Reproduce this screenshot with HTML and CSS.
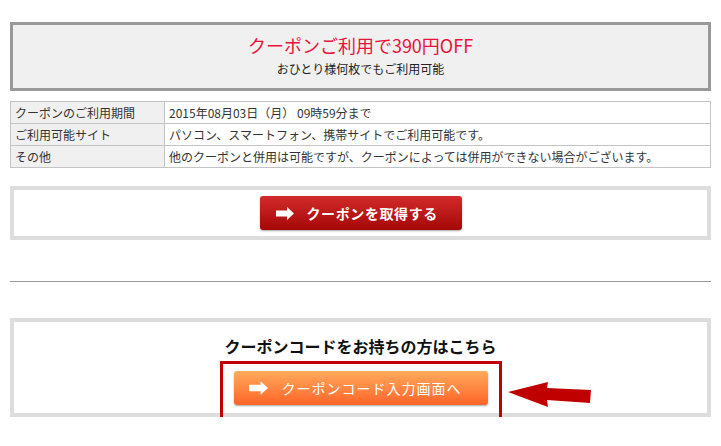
FILE: index.html
```html
<!DOCTYPE html>
<html lang="ja">
<head>
    <meta charset="UTF-8">
    <meta name="viewport" content="width=device-width, initial-scale=1.0">
    <title>クーポン</title>
    <link rel="stylesheet" href="styles.css">
</head>
<body>

    <div class="coupon-head">
        <p class="coupon-title">クーポンご利用で390円OFF</p>
        <p class="coupon-note">おひとり様何枚でもご利用可能</p>
    </div>

    <table class="coupon-info">
        <tr>
            <th>クーポンのご利用期間</th>
            <td>2015年08月03日（月） 09時59分まで</td>
        </tr>
        <tr>
            <th>ご利用可能サイト</th>
            <td>パソコン、スマートフォン、携帯サイトでご利用可能です。</td>
        </tr>
        <tr>
            <th>その他</th>
            <td>他のクーポンと併用は可能ですが、クーポンによっては併用ができない場合がございます。</td>
        </tr>
    </table>

    <div class="btn-box">
        <a class="btn btn-red" href="#">
            <svg class="btn-icon" width="18" height="13" viewBox="0 0 18 13"><polygon points="0,3.5 11,3.5 11,0 18,6.5 11,13 11,9.5 0,9.5" fill="#fff"/></svg>
            <span>クーポンを取得する</span>
        </a>
    </div>

    <hr class="divider">

    <div class="btn-box code-box">
        <h3>クーポンコードをお持ちの方はこちら</h3>
        <span class="code-wrap">
            <a class="btn btn-orange" href="#">
                <svg class="btn-icon" width="19" height="14" viewBox="0 0 18 13"><polygon points="0,3.5 11,3.5 11,0 18,6.5 11,13 11,9.5 0,9.5" fill="#fff"/></svg>
                <span>クーポンコード入力画面へ</span>
            </a>
            <svg class="pointer" width="88" height="30" viewBox="0 0 88 30"><polygon points="2,13 42,3 41,9 85,11 84,24 41,21 42,28" fill="#c00000"/></svg>
        </span>
    </div>

</body>
</html>
```

FILE: styles.css
```css
body {
    font-family: "Noto Sans CJK JP", "Liberation Sans", sans-serif;
    margin: 0;
    padding: 22px 10px 0;
    color: #333;
    background: #fff;
}
p {
    margin: 0;
}
.coupon-head {
    background: #f0f0f0;
    border: 3px solid #999;
    padding: 8px 0 11px;
    text-align: center;
}
.coupon-title {
    font-size: 18px;
    line-height: 24px;
    color: #e8123c;
}
.coupon-note {
    margin-top: 4px;
    font-size: 12px;
    line-height: 16px;
    color: #222;
}
.coupon-info {
    width: 100%;
    margin-top: 10px;
    border-collapse: collapse;
    font-size: 12px;
}
.coupon-info th,
.coupon-info td {
    border: 1px solid #c4c4c4;
    padding: 0 4px;
    line-height: 21px;
    text-align: left;
    font-weight: normal;
}
.coupon-info th {
    width: 145px;
    background: #f0f0f0;
}
.btn-box {
    margin-top: 18px;
    border: 4px solid #ddd;
    padding: 6px 0;
    text-align: center;
}
.btn {
    display: inline-flex;
    align-items: center;
    height: 34px;
    box-sizing: border-box;
    border-radius: 3px;
    color: #fff;
    text-decoration: none;
    font-size: 14px;
    letter-spacing: 0.6px;
    vertical-align: top;
    box-shadow: 0 1px 2px rgba(0, 0, 0, 0.35);
}
.btn-red {
    width: 202px;
    padding-left: 16px;
    gap: 13px;
    font-weight: bold;
    background: linear-gradient(#d22b2b, #a50707);
}
.btn-orange {
    width: 254px;
    padding-left: 15px;
    gap: 14px;
    letter-spacing: 1px;
    background: linear-gradient(#ffab5c, #ff6428);
}
.btn-icon {
    flex: none;
}
.divider {
    margin: 41px 0 0;
    border: 0;
    border-top: 1px solid #999;
}
.code-box {
    margin-top: 36px;
    padding: 12px 0 8px;
}
.code-box h3 {
    margin: 0 0 13px;
    font-size: 16px;
    line-height: 24px;
    color: #111;
}
.code-wrap {
    position: relative;
    display: inline-block;
    vertical-align: top;
}
.code-wrap::after {
    content: "";
    position: absolute;
    top: -10px;
    left: -14px;
    right: -14px;
    bottom: -15px;
    border: 3px solid #c00000;
}
.pointer {
    position: absolute;
    left: 272px;
    top: 8px;
}
```
